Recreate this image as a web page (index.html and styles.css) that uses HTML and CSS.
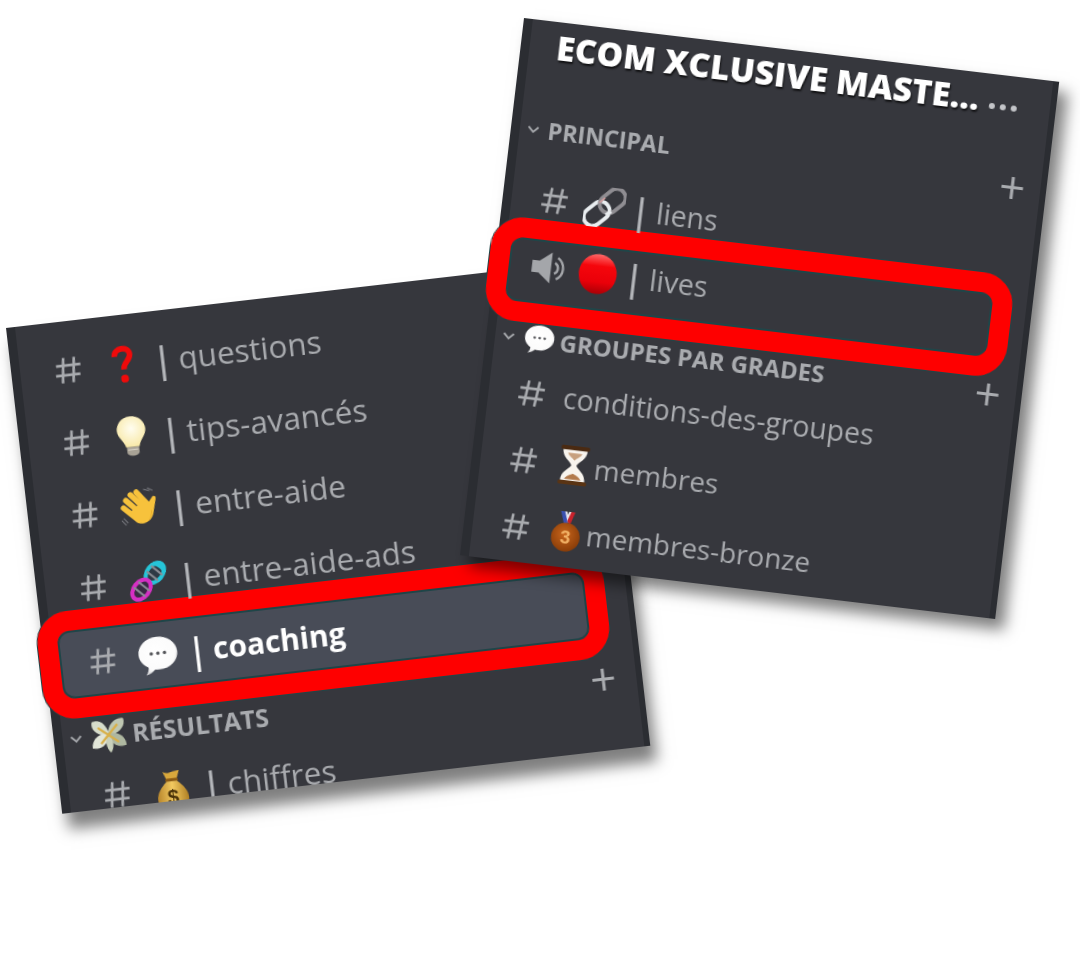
FILE: index.html
```html
<!DOCTYPE html>
<html lang="fr">
  <head>
    <meta charset="UTF-8" />
    <meta name="viewport" content="width=device-width, initial-scale=1.0" />
    <title>Salons</title>
    <link rel="stylesheet" href="styles.css">
  </head>
  <body>
    <!-- Icon sprites -->
    <svg class="sprites" aria-hidden="true">
      <defs>
        <linearGradient id="g-red" x1="0" y1="0" x2="0" y2="1">
          <stop offset="0" stop-color="#ff6a6a" />
          <stop offset="0.3" stop-color="#f5060c" />
          <stop offset="0.7" stop-color="#ea0009" />
          <stop offset="1" stop-color="#a90006" />
        </linearGradient>
        <radialGradient id="g-bubble" cx="45%" cy="40%" r="65%">
          <stop offset="0" stop-color="#ffffff" />
          <stop offset="0.75" stop-color="#fbfbfb" />
          <stop offset="1" stop-color="#c9c9cc" />
        </radialGradient>
        <radialGradient id="g-bronze" cx="45%" cy="40%" r="60%">
          <stop offset="0" stop-color="#c8651c" />
          <stop offset="1" stop-color="#8a3d08" />
        </radialGradient>
        <linearGradient id="g-bag" x1="0" y1="0" x2="1" y2="0">
          <stop offset="0" stop-color="#b8862c" />
          <stop offset="0.5" stop-color="#f2c960" />
          <stop offset="1" stop-color="#b08024" />
        </linearGradient>
        <radialGradient id="g-bulb" cx="50%" cy="40%" r="60%">
          <stop offset="0" stop-color="#fffdf0" />
          <stop offset="1" stop-color="#f8e9a8" />
        </radialGradient>
      </defs>

      <symbol id="i-hash" viewBox="0 0 24 24">
        <path d="M9.2 2.500 7 21.500M17.200 2.500 15 21.500M3.200 8.300h18.400M2.400 15.700h18.400" fill="none" stroke="currentColor" stroke-width="2" />
      </symbol>
      <symbol id="i-speaker" viewBox="0 0 30 30">
        <path d="M1 10h6l10-8v26l-10-8H1z" fill="#a4a6aa" />
        <path d="M20 10.500a5 5 0 0 1 0 9M22 6a10.500 10.500 0 0 1 0 18" fill="none" stroke="#a4a6aa" stroke-width="2" />
      </symbol>
      <symbol id="i-chevron" viewBox="0 0 12 12">
        <path d="M2 4l4 4 4-4" fill="none" stroke="#a4a6aa" stroke-width="1.500" />
      </symbol>
      <symbol id="e-link" viewBox="4 4 32 32">
        <g fill="none" transform="rotate(-45 20 20)">
          <rect x="1" y="13" width="22" height="14" rx="7" stroke="#e9edf0" stroke-width="3" />
          <rect x="17" y="13" width="22" height="14" rx="7" stroke="#8f8d92" stroke-width="3" />
          <path d="M19 14.500h6" stroke="#d8a0a0" stroke-width="1.200" />
          <path d="M17 25.500h5" stroke="#e9edf0" stroke-width="3" />
        </g>
      </symbol>
      <symbol id="e-red" viewBox="0 0 40 40">
        <ellipse cx="20" cy="20" rx="18.500" ry="19.500" fill="url(#g-red)" />
      </symbol>
      <symbol id="e-bubble" viewBox="0 0 40 40">
        <path d="M20 2c10.500 0 19 7 19 16s-8.500 16-19 16c-1.500 0-3-.2-4.400-.4C13 36 10 38 6.500 38.500 8.500 36 9.500 33.500 9.400 31 4.300 28 1 23.300 1 18 1 9 9.500 2 20 2z" fill="url(#g-bubble)" />
        <circle cx="13.500" cy="18" r="1.700" fill="#55565a" />
        <circle cx="20" cy="18" r="1.700" fill="#55565a" />
        <circle cx="26.500" cy="18" r="1.700" fill="#55565a" />
      </symbol>
      <symbol id="e-hourglass" viewBox="0 0 40 40">
        <path d="M8 4h24c0 10-8 12-9.500 16C24 24 32 26 32 36H8c0-10 8-12 9.500-16C16 16 8 14 8 4z" fill="#f8f4ee" />
        <path d="M13 8h14c-1 3-5 5-7 7-2-2-6-4-7-7z" fill="#c7a07e" />
        <path d="M12 34c1-3 6-5 8-6 2 1 7 3 8 6z" fill="#b27a4c" />
        <rect x="6" y="1" width="28" height="4" rx="1.500" fill="#4a2a12" />
        <rect x="6" y="35" width="28" height="4" rx="1.500" fill="#5a3414" />
      </symbol>
      <symbol id="e-medal" viewBox="0 0 40 40">
        <path d="M14 0l6 12 6-12h-5l-1 3-1-3z" fill="#e8e8f0" />
        <path d="M13 0h4l4 12h-4z" fill="#3a50b0" />
        <path d="M27 0h-4l-3 9 3 4z" fill="#c8222c" />
        <circle cx="20" cy="25" r="14" fill="url(#g-bronze)" />
      </symbol>
      <symbol id="e-question" viewBox="0 0 40 40">
        <path d="M12 13c0-9 15-10 15-1 0 6-7 7-7 14" fill="none" stroke="#f00a0a" stroke-width="5.500" />
        <circle cx="20" cy="35" r="3.800" fill="#f00a0a" />
      </symbol>
      <symbol id="e-bulb" viewBox="0 0 40 40">
        <path d="M20 1C11 1 6 8 6 14c0 7 6 10 7.500 17h13C28 24 34 21 34 14 34 8 29 1 20 1z" fill="url(#g-bulb)" />
        <path d="M14 31h12v5c0 2-3 3.500-6 3.500s-6-1.500-6-3.500z" fill="#a8a296" />
        <path d="M15 33.500h10" stroke="#d8d4c8" stroke-width="1" />
      </symbol>
      <symbol id="e-wave" viewBox="0 0 40 40">
        <g fill="none" stroke="#7a7b80" stroke-width="1">
          <path d="M25 2l6 2M29 1l5 3M1 30l4 5M3 28l4 5" />
        </g>
        <g fill="none" stroke="#f7c23c" stroke-width="5.500" stroke-linecap="round">
          <path d="M12 6l11 13M7 11l12 13M4 18l11 11M18 4l9 12" />
        </g>
        <path d="M11 22l12-9 5 3 5-6c2-1 4 0 3 3l-3 11c-1 7-7 12-14 11-5-1-7-5-8-13z" fill="#f7c23c" />
        <path d="M15 36c6 2 13-2 15-9l1-5c1 8-7 17-16 14z" fill="#d99a1e" />
      </symbol>
      <symbol id="e-dna" viewBox="0 0 40 40">
        <g transform="rotate(-45 20 20)">
          <ellipse cx="30" cy="20" rx="11" ry="7.500" fill="#2e3a44" stroke="#26c5d8" stroke-width="4" />
          <ellipse cx="9" cy="20" rx="11" ry="7.500" fill="#3a2a44" stroke="#d62fc4" stroke-width="4" />
          <path d="M26 13v14M33 13v14M6 13v14M13 13v14" stroke="#8a8d94" stroke-width="2" />
          <path d="M36 13.500c3 2 3 11 0 13" fill="none" stroke="#26c5d8" stroke-width="4" />
        </g>
      </symbol>
      <symbol id="e-money" viewBox="0 0 40 40">
        <path d="M21 20C19 8 12 1 3 4c-3 9 6 17 18 16z" fill="#d6dccb" />
        <path d="M19 20C21 8 28 2 38 3c3 9-7 18-19 17z" fill="#bfc7b2" />
        <path d="M21 19C10 16 1 23 1 33c9 3 18-2 20-14z" fill="#e2e6d9" />
        <path d="M19 19c11-3 20 4 20 14-9 3-18-2-20-14z" fill="#aeb7a0" />
        <path d="M20 20c-5 6-4 14 1 20 5-6 4-15-1-20z" fill="#c9d0bb" />
        <path d="M9 11l22 18M31 9L11 29" stroke="#d8b04a" stroke-width="2.500" />
      </symbol>
      <symbol id="e-bag" viewBox="0 0 40 40">
        <path d="M12 1c3 2 5 2 8 1s6-1 8-1l-3 8h-10z" fill="#d9a83c" />
        <rect x="14" y="8" width="12" height="3.500" rx="1" fill="#8a5a14" />
        <path d="M15 11C8 17 4 23 5 30c1 6 7 9 15 9s14-3 15-9c1-7-3-13-10-19z" fill="url(#g-bag)" />
      </symbol>
    </svg>

    <div class="collage">
      <!-- Left capture -->
      <div class="panel panel-left">
        <div class="row">
          <svg class="hash"><use href="#i-hash" /></svg>
          <svg class="emoji"><use href="#e-question" /></svg>
          <span class="sep">|</span>
          <span class="name">questions</span>
        </div>
        <div class="row">
          <svg class="hash"><use href="#i-hash" /></svg>
          <svg class="emoji"><use href="#e-bulb" /></svg>
          <span class="sep">|</span>
          <span class="name">tips-avancés</span>
        </div>
        <div class="row">
          <svg class="hash"><use href="#i-hash" /></svg>
          <svg class="emoji"><use href="#e-wave" /></svg>
          <span class="sep">|</span>
          <span class="name">entre-aide</span>
        </div>
        <div class="row">
          <svg class="hash"><use href="#i-hash" /></svg>
          <svg class="emoji"><use href="#e-dna" /></svg>
          <span class="sep">|</span>
          <span class="name">entre-aide-ads</span>
        </div>
        <div class="row framed selected">
          <svg class="hash"><use href="#i-hash" /></svg>
          <svg class="emoji"><use href="#e-bubble" /></svg>
          <span class="sep">|</span>
          <span class="name">coaching</span>
        </div>
        <div class="group group-results">
          <svg class="chevron"><use href="#i-chevron" /></svg>
          <svg class="group-emoji"><use href="#e-money" /></svg>
          <span class="group-name">Résultats</span>
          <span class="plus">+</span>
        </div>
        <div class="row row-cut">
          <svg class="hash"><use href="#i-hash" /></svg>
          <svg class="emoji" viewBox="0 0 40 40">
            <use href="#e-bag" width="40" height="40" />
            <text x="20" y="33" class="bag-sign" text-anchor="middle">$</text>
          </svg>
          <span class="sep">|</span>
          <span class="name">chiffres</span>
        </div>
      </div>

      <!-- Right capture -->
      <div class="panel panel-right">
        <div class="server">
          <span class="server-name">Ecom Xclusive Maste...</span>
          <svg class="dots" viewBox="0 0 30 8"><circle cx="4" cy="4" r="3" /><circle cx="15" cy="4" r="3" /><circle cx="26" cy="4" r="3" /></svg>
        </div>
        <div class="group group-main">
          <svg class="chevron"><use href="#i-chevron" /></svg>
          <span class="group-name">Principal</span>
          <span class="plus">+</span>
        </div>
        <div class="row row-links">
          <svg class="hash"><use href="#i-hash" /></svg>
          <svg class="emoji"><use href="#e-link" /></svg>
          <span class="sep">|</span>
          <span class="name">liens</span>
        </div>
        <div class="row framed">
          <svg class="hash speaker"><use href="#i-speaker" /></svg>
          <svg class="emoji"><use href="#e-red" /></svg>
          <span class="sep">|</span>
          <span class="name">lives</span>
        </div>
        <div class="group group-grades">
          <svg class="chevron"><use href="#i-chevron" /></svg>
          <svg class="group-emoji"><use href="#e-bubble" /></svg>
          <span class="group-name">Groupes par grades</span>
          <span class="plus">+</span>
        </div>
        <div class="row row-plain">
          <svg class="hash"><use href="#i-hash" /></svg>
          <span class="name">conditions-des-groupes</span>
        </div>
        <div class="row row-tight">
          <svg class="hash"><use href="#i-hash" /></svg>
          <svg class="emoji"><use href="#e-hourglass" /></svg>
          <span class="name">membres</span>
        </div>
        <div class="row row-tight">
          <svg class="hash"><use href="#i-hash" /></svg>
          <svg class="emoji" viewBox="0 0 40 40">
            <use href="#e-medal" width="40" height="40" />
            <text x="20" y="31.500" class="medal-num" text-anchor="middle">3</text>
          </svg>
          <span class="name">membres-bronze</span>
        </div>
      </div>
    </div>
  </body>
</html>
```

FILE: styles.css
```css
body {
  font-family: "Open Sans", "Liberation Sans", sans-serif;
  background-color: white;
  margin: 0;
  padding: 0;
}

.sprites {
  position: absolute;
  width: 0;
  height: 0;
}

.medal-num {
  font-family: "Liberation Sans", sans-serif;
  font-size: 18px;
  font-weight: bold;
  fill: #f2b266;
}

.bag-sign {
  font-family: "Liberation Sans", sans-serif;
  font-size: 20px;
  font-weight: bold;
  fill: #4a3208;
}

.collage {
  position: relative;
  width: 1080px;
  height: 963px;
  overflow: hidden;
}

/* The two captures are tilted on a free canvas */
.panel {
  position: absolute;
  box-sizing: border-box;
  background-color: #36373d;
  border-left: 9px solid #2b2d32;
  border-right: 6px solid #2b2d32;
  transform-origin: top left;
  color: #a9abaf;
  filter: blur(0.45px);
}

.panel-left {
  left: 6px;
  top: 328px;
  width: 592px;
  height: 489px;
  padding-top: 12px;
  transform: rotate(-6.6deg);
  box-shadow: 5px 16px 14px rgba(0, 0, 0, 0.5);
}

.panel-right {
  left: 524px;
  top: 18px;
  width: 539px;
  height: 541px;
  transform: rotate(6.8deg);
  box-shadow: 10px 10px 14px rgba(0, 0, 0, 0.5);
}

/* Channel rows */
.row {
  display: flex;
  align-items: center;
  box-sizing: border-box;
  height: 73px;
  padding-left: 32px;
  font-size: 31.5px;
}

.hash {
  flex: none;
  width: 32px;
  height: 36px;
  margin-right: 19px;
}

.emoji {
  flex: none;
  width: 41px;
  height: 41px;
  margin-right: 9px;
}

.sep {
  color: #b4b6ba;
  font-size: 36px;
  font-weight: 600;
  line-height: 38px;
  margin-right: 6px;
}

.name {
  white-space: nowrap;
  line-height: 38px;
}

.framed {
  height: 108px;
  width: 570px;
  margin-top: -16px;
  margin-left: -14px;
  padding-left: 27px;
  border: 20px solid #fe0000;
  border-radius: 32px;
  box-shadow: inset 0 0 0 2px #1f4548, 0 0 0 1px #1f4548;
}

.selected {
  background-color: #484c57;
}

.selected .name {
  color: white;
  font-weight: 700;
  font-size: 30px;
}

.selected .sep {
  color: white;
}

.row-cut {
  height: 53px;
  padding-top: 22px;
  align-items: flex-start;
  overflow: hidden;
}

/* Category headers */
.group {
  display: flex;
  align-items: center;
  box-sizing: border-box;
  height: 40px;
  padding-left: 6px;
  padding-right: 20px;
  font-weight: 700;
}

.group-name {
  text-transform: uppercase;
  white-space: nowrap;
}

.group-results {
  font-size: 25px;
}

.chevron {
  flex: none;
  width: 15px;
  height: 15px;
  margin-right: 7px;
}

.group-emoji {
  flex: none;
  width: 36px;
  height: 36px;
  margin-right: 6px;
}

.plus {
  margin-left: auto;
  font-size: 46px;
  font-weight: 400;
  line-height: 36px;
}

/* Right capture */
.server {
  display: flex;
  align-items: center;
  height: 50px;
  padding-left: 27px;
  padding-right: 32px;
  color: white;
  font-size: 33.7px;
  font-weight: 800;
  text-transform: uppercase;
  white-space: nowrap;
  text-shadow: 1px 2px 2px rgba(0, 0, 0, 0.7);
}

.dots {
  width: 30px;
  height: 8px;
  margin-left: auto;
  margin-top: 14px;
  fill: #c4c5c9;
}

.panel-right .row {
  height: 68px;
  padding-left: 27px;
  font-size: 28.5px;
}

.panel-right .group {
  padding-right: 15px;
}

.group-main {
  height: 50px;
  margin-top: 34px;
  font-size: 23.3px;
}

.panel-right .row-links {
  margin-top: 10px;
}

.panel-right .hash {
  margin-right: 14px;
}

.panel-right .emoji {
  margin-right: 6px;
}

.panel-right .framed {
  height: 104px;
  width: 525px;
  margin-top: -14px;
  margin-left: -15px;
  padding-left: 22px;
  padding-bottom: 10px;
}

.panel-right .speaker {
  width: 36px;
  height: 36px;
  margin-right: 11px;
}

.group-grades {
  height: 30px;
  font-size: 24px;
}

.group-grades .group-emoji {
  width: 31px;
  height: 31px;
  margin-left: 1px;
  margin-right: 5px;
}

.panel-right .row-plain {
  height: 67px;
  margin-top: 6px;
}

.panel-right .row-plain .hash {
  margin-right: 16px;
}

.panel-right .row-tight {
  height: 67px;
  font-size: 28px;
}

.panel-right .row-tight .emoji {
  margin-right: 0;
}
```
